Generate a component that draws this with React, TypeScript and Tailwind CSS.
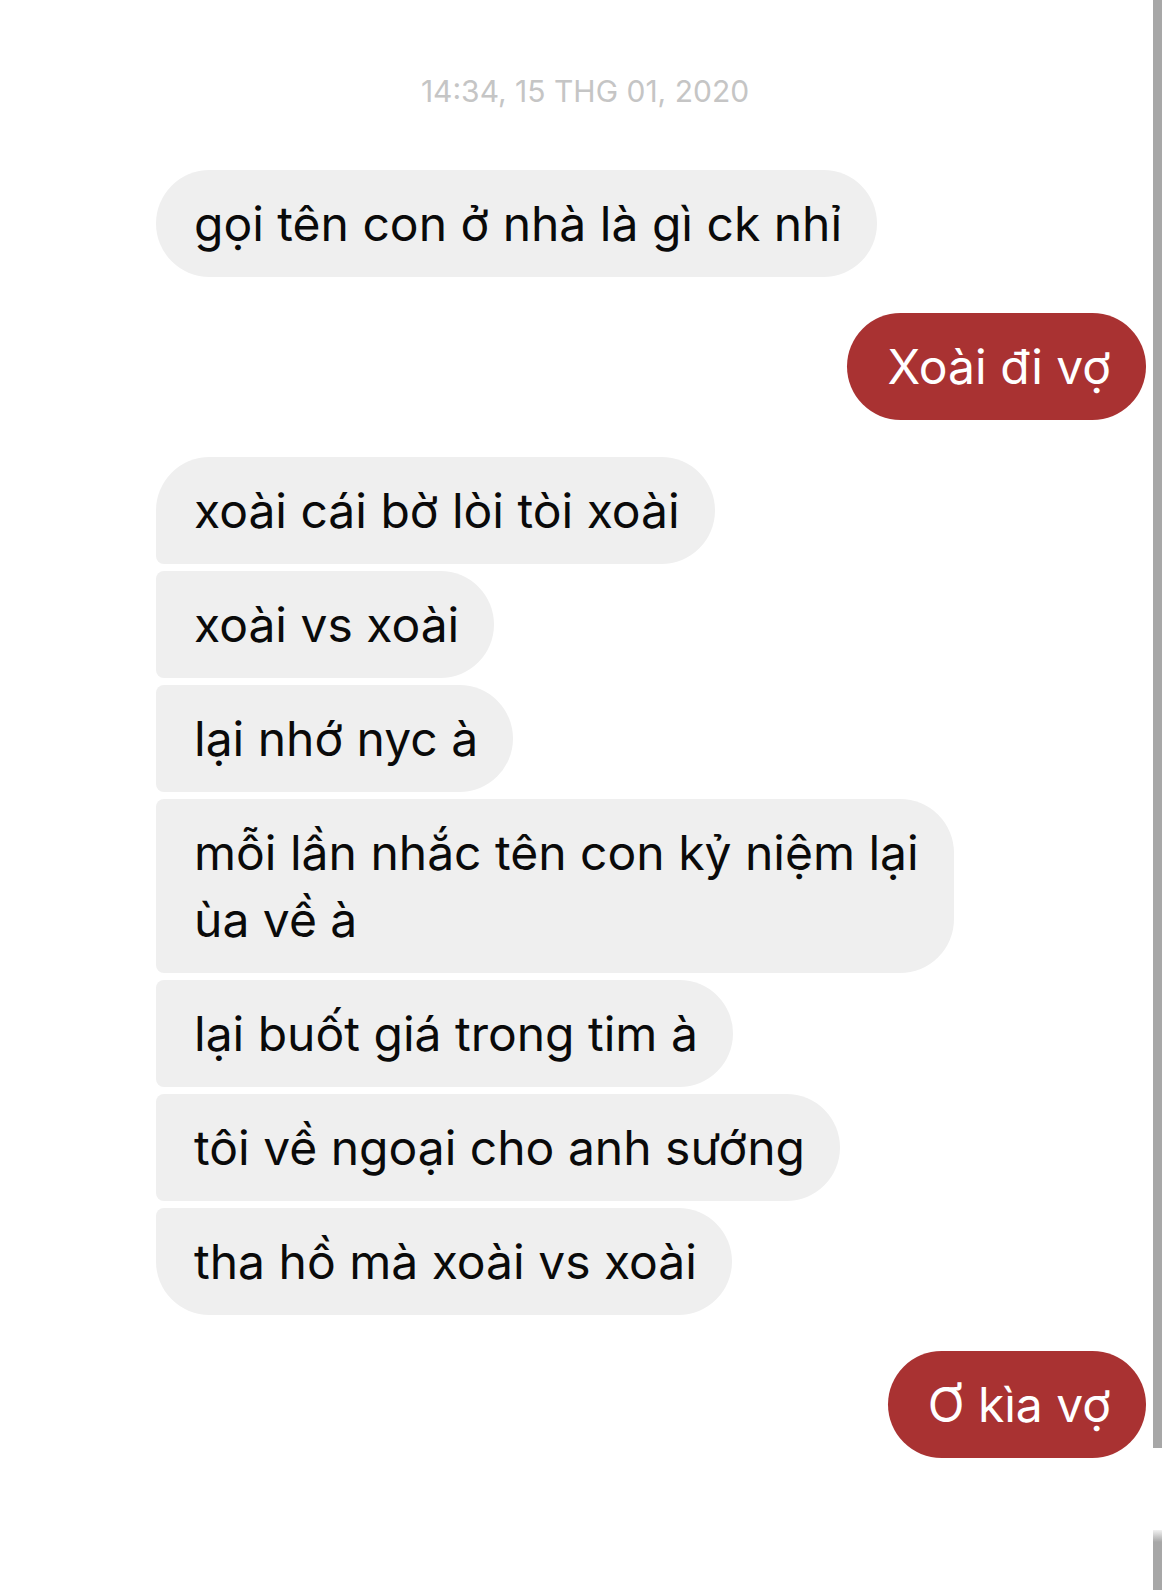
import React from 'react';

type Msg = { text: React.ReactNode; corners: string };

// received group, bubble corners depend on position inside the group
const received: Msg[] = [
  { text: 'xoài cái bờ lòi tòi xoài', corners: 'rounded-tl-[54px] rounded-bl-[8px]' },
  { text: 'xoài vs xoài', corners: 'rounded-tl-[8px] rounded-bl-[8px]' },
  { text: 'lại nhớ nyc à', corners: 'rounded-tl-[8px] rounded-bl-[8px]' },
  {
    text: (
      <>
        mỗi lần nhắc tên con kỷ niệm lại
        <br />
        ùa về à
      </>
    ),
    corners: 'rounded-tl-[8px] rounded-bl-[8px]',
  },
  { text: 'lại buốt giá trong tim à', corners: 'rounded-tl-[8px] rounded-bl-[8px]' },
  { text: 'tôi về ngoại cho anh sướng', corners: 'rounded-tl-[8px] rounded-bl-[8px]' },
  { text: 'tha hồ mà xoài vs xoài', corners: 'rounded-tl-[8px] rounded-bl-[54px]' },
];

const font = { fontFamily: 'Inter, "Noto Sans", "Liberation Sans", sans-serif' };

const Incoming: React.FC<{ children: React.ReactNode; corners: string }> = ({ children, corners }) => (
  <div className="flex">
    <div
      className={`bg-[#efefef] text-[#0a0a0a] text-[48px] leading-[67px] pl-[38px] pr-[35px] py-[20px] rounded-r-[54px] ${corners}`}
    >
      {children}
    </div>
  </div>
);

const Outgoing: React.FC<{ children: React.ReactNode; className?: string }> = ({ children, className }) => (
  <div className={`flex justify-end ${className ?? ''}`}>
    <div className="bg-[#a93232] text-white text-[48px] leading-[67px] pl-[40px] pr-[35px] py-[20px] rounded-[54px]">
      {children}
    </div>
  </div>
);

export default function App() {
  return (
    <div className="relative w-[1170px] h-[1590px] bg-white overflow-hidden" style={font}>
      {/* scroll indicator on the right */}
      <div className="absolute left-[1153px] top-0 w-[9px] h-[1448px] bg-[#a7a7a7]" />
      <div className="absolute left-[1153px] top-[1530px] w-[9px] h-[60px] bg-gradient-to-b from-[#f2f2f2] to-[#a7a7a7] to-[20%]" />

      <div className="pt-[74px] h-[108px] flex items-center justify-center text-[30px] leading-[34px] text-[#c5c5c5]">
        14:34, 15 THG 01, 2020
      </div>

      <div className="pl-[156px] pr-[24px]">
        <div className="mt-[62px] flex">
          <div className="bg-[#efefef] text-[#0a0a0a] text-[48px] leading-[67px] pl-[38px] pr-[35px] py-[20px] rounded-[54px]">
            gọi tên con ở nhà là gì ck nhỉ
          </div>
        </div>

        <Outgoing className="mt-[36px]">Xoài đi vợ</Outgoing>

        <div className="mt-[37px] flex flex-col gap-[7px]">
          {received.map((m, i) => (
            <Incoming key={i} corners={m.corners}>
              {m.text}
            </Incoming>
          ))}
        </div>

        <Outgoing className="mt-[36px]">Ơ kìa vợ</Outgoing>
      </div>
    </div>
  );
}
